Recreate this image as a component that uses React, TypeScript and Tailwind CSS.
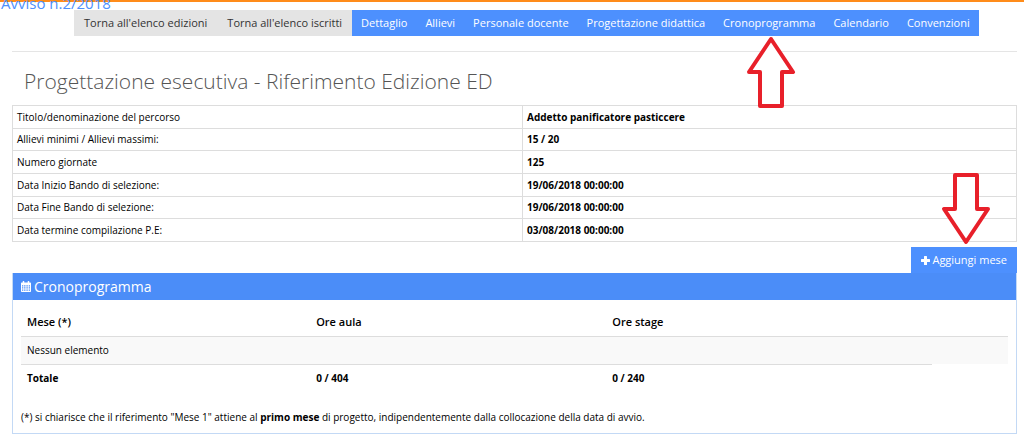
import React from "react";

type NavItem = { label: string; back?: boolean };

const NAV: NavItem[] = [
  { label: "Torna all'elenco edizioni", back: true },
  { label: "Torna all'elenco iscritti", back: true },
  { label: "Dettaglio" },
  { label: "Allievi" },
  { label: "Personale docente" },
  { label: "Progettazione didattica" },
  { label: "Cronoprogramma" },
  { label: "Calendario" },
  { label: "Convenzioni" },
];

const DETAILS = [
  ["Titolo/denominazione del percorso", "Addetto panificatore pasticcere"],
  ["Allievi minimi / Allievi massimi:", "15 / 20"],
  ["Numero giornate", "125"],
  ["Data Inizio Bando di selezione:", "19/06/2018 00:00:00"],
  ["Data Fine Bando di selezione:", "19/06/2018 00:00:00"],
  ["Data termine compilazione P.E:", "03/08/2018 00:00:00"],
];

function Arrow({ className }: { className: string }) {
  return (
    <svg
      className={className}
      width="50"
      height="72"
      viewBox="0 0 50 72"
      fill="white"
      stroke="#e8202a"
      strokeWidth="4"
      strokeLinejoin="round"
      aria-hidden="true"
    >
      <path d="M25 3 L47 36 H36 V70 H14 V36 H3 Z" />
    </svg>
  );
}

function PlusIcon() {
  return (
    <svg width="9" height="9" viewBox="0 0 9 9" fill="currentColor" aria-hidden="true">
      <path d="M3.6 0h1.8q.6 0 .6.6V3h2.4q.6 0 .6.6v1.8q0 .6-.6.6H6v2.4q0 .6-.6.6H3.6q-.6 0-.6-.6V6H.6Q0 6 0 5.400V3.600Q0 3 .6 3H3V.6Q3 0 3.600 0z" />
    </svg>
  );
}

function CalendarIcon() {
  return (
    <svg width="10" height="11" viewBox="0 0 10 11" fill="currentColor" aria-hidden="true">
      <path
        fillRule="evenodd"
        d="M.7 1.500h1V.6q0-.6.6-.6h.4q.6 0 .6.6v.9h3.400V.6q0-.6.6-.6h.4q.6 0 .6.6v.9h1q.7 0 .7.7v8.100q0 .7-.7.7H.7q-.7 0-.7-.7V2.200q0-.7.7-.7zM1 4.200v1.200h1.300V4.200zm2.100 0v1.200h1.400V4.200zm2.300 0v1.200h1.400V4.200zm2.300 0v1.200H9V4.200zM1 6.300v1.200h1.300V6.300zm2.100 0v1.200h1.400V6.300zm2.300 0v1.200h1.400V6.300zm2.300 0v1.200H9V6.300zM1 8.400v1.300h1.300V8.400zm2.100 0v1.300h1.400V8.400zm2.300 0v1.300h1.400V8.400zm2.300 0v1.300H9V8.400z"
      />
    </svg>
  );
}

function TopNav() {
  return (
    <nav className="ml-[74px] mt-2 flex text-[11px] leading-[26px] whitespace-nowrap">
      {NAV.map((item) => (
        <a
          key={item.label}
          href="#"
          className={
            item.back
              ? "bg-[#e4e4e4] px-[10px] text-[#333333]"
              : "bg-[#4d90fe] px-[9px] text-white"
          }
        >
          {item.label}
        </a>
      ))}
    </nav>
  );
}

function DetailsTable() {
  return (
    <table className="mt-2 h-[137px] w-full table-fixed border-collapse">
      <tbody>
        {DETAILS.map(([label, value]) => (
          <tr key={label}>
            <th
              scope="row"
              className="w-[50.8%] border border-[#dddddd] px-1 py-0 text-left font-normal"
            >
              {label}
            </th>
            <td className="border border-[#dddddd] px-1 py-0 font-bold">
              {value}
            </td>
          </tr>
        ))}
      </tbody>
    </table>
  );
}

function MonthsTable() {
  return (
    <table className="w-full table-fixed border-collapse text-left">
      <colgroup>
        <col className="w-[29.3%]" />
        <col className="w-[30%]" />
        <col className="w-[33%]" />
        <col />
      </colgroup>
      <thead className="text-[11px]">
        <tr className="h-7 border-b border-[#dddddd]">
          <th className="px-[6px] py-0 font-semibold">Mese (*)</th>
          <th className="px-[6px] py-0 font-semibold">Ore aula</th>
          <th className="px-[6px] py-0 font-semibold">Ore stage</th>
          <th className="p-0" />
        </tr>
      </thead>
      <tbody>
        <tr className="h-7 bg-[#f9f9f9]">
          <td colSpan={4} className="px-[6px] py-0">
            Nessun elemento
          </td>
        </tr>
      </tbody>
      <tfoot>
        <tr className="h-7 font-bold">
          <td className="border-t border-[#dddddd] px-[6px] py-0">Totale</td>
          <td className="border-t border-[#dddddd] px-[6px] py-0">0 / 404</td>
          <td className="border-t border-[#dddddd] px-[6px] py-0">0 / 240</td>
        </tr>
      </tfoot>
    </table>
  );
}

export default function App() {
  return (
    <div className="relative bg-white font-['Open_Sans',sans-serif] text-[10px] leading-4 text-black">
      {/* Page header, scrolled almost out of view */}
      <div className="h-[2px] bg-[#ff8c1a]" />
      <div className="absolute -top-[7px] left-px text-[15px] leading-5 whitespace-nowrap text-[#4d90fe]">
        Avviso n.2/2018
      </div>

      <TopNav />

      <main className="ml-3 mr-[7px] mt-[15px] border-t border-[#e5e5e5]">
        <h1 className="ml-3 mt-[13px] text-[21px] leading-8 font-light text-[#555555]">
          Progettazione esecutiva - Riferimento Edizione ED
        </h1>

        <DetailsTable />

        <div className="mt-[5px] flex justify-end">
          <button
            type="button"
            className="flex h-[26px] items-center gap-[2px] bg-[#4d90fe] px-[10px] text-[11px] text-white"
          >
            <PlusIcon />
            Aggiungi mese
          </button>
        </div>

        <section className="border border-t-0 border-[#c3d9f5]">
          <h2 className="flex h-[27px] items-center gap-[3px] bg-[#4b8df8] px-2 text-sm text-white">
            <CalendarIcon />
            Cronoprogramma
          </h2>
          <div className="px-2 pb-2 pt-2">
            <MonthsTable />
            <p className="mt-[17px]">
              (*) si chiarisce che il riferimento "Mese 1" attiene al{" "}
              <b>primo mese</b> di progetto, indipendentemente dalla
              collocazione della data di avvio.
            </p>
          </div>
        </section>
      </main>

      {/* Guide arrows over the page */}
      <Arrow className="absolute left-[746px] top-9" />
      <Arrow className="absolute left-[941px] top-[173px] rotate-180" />
    </div>
  );
}
